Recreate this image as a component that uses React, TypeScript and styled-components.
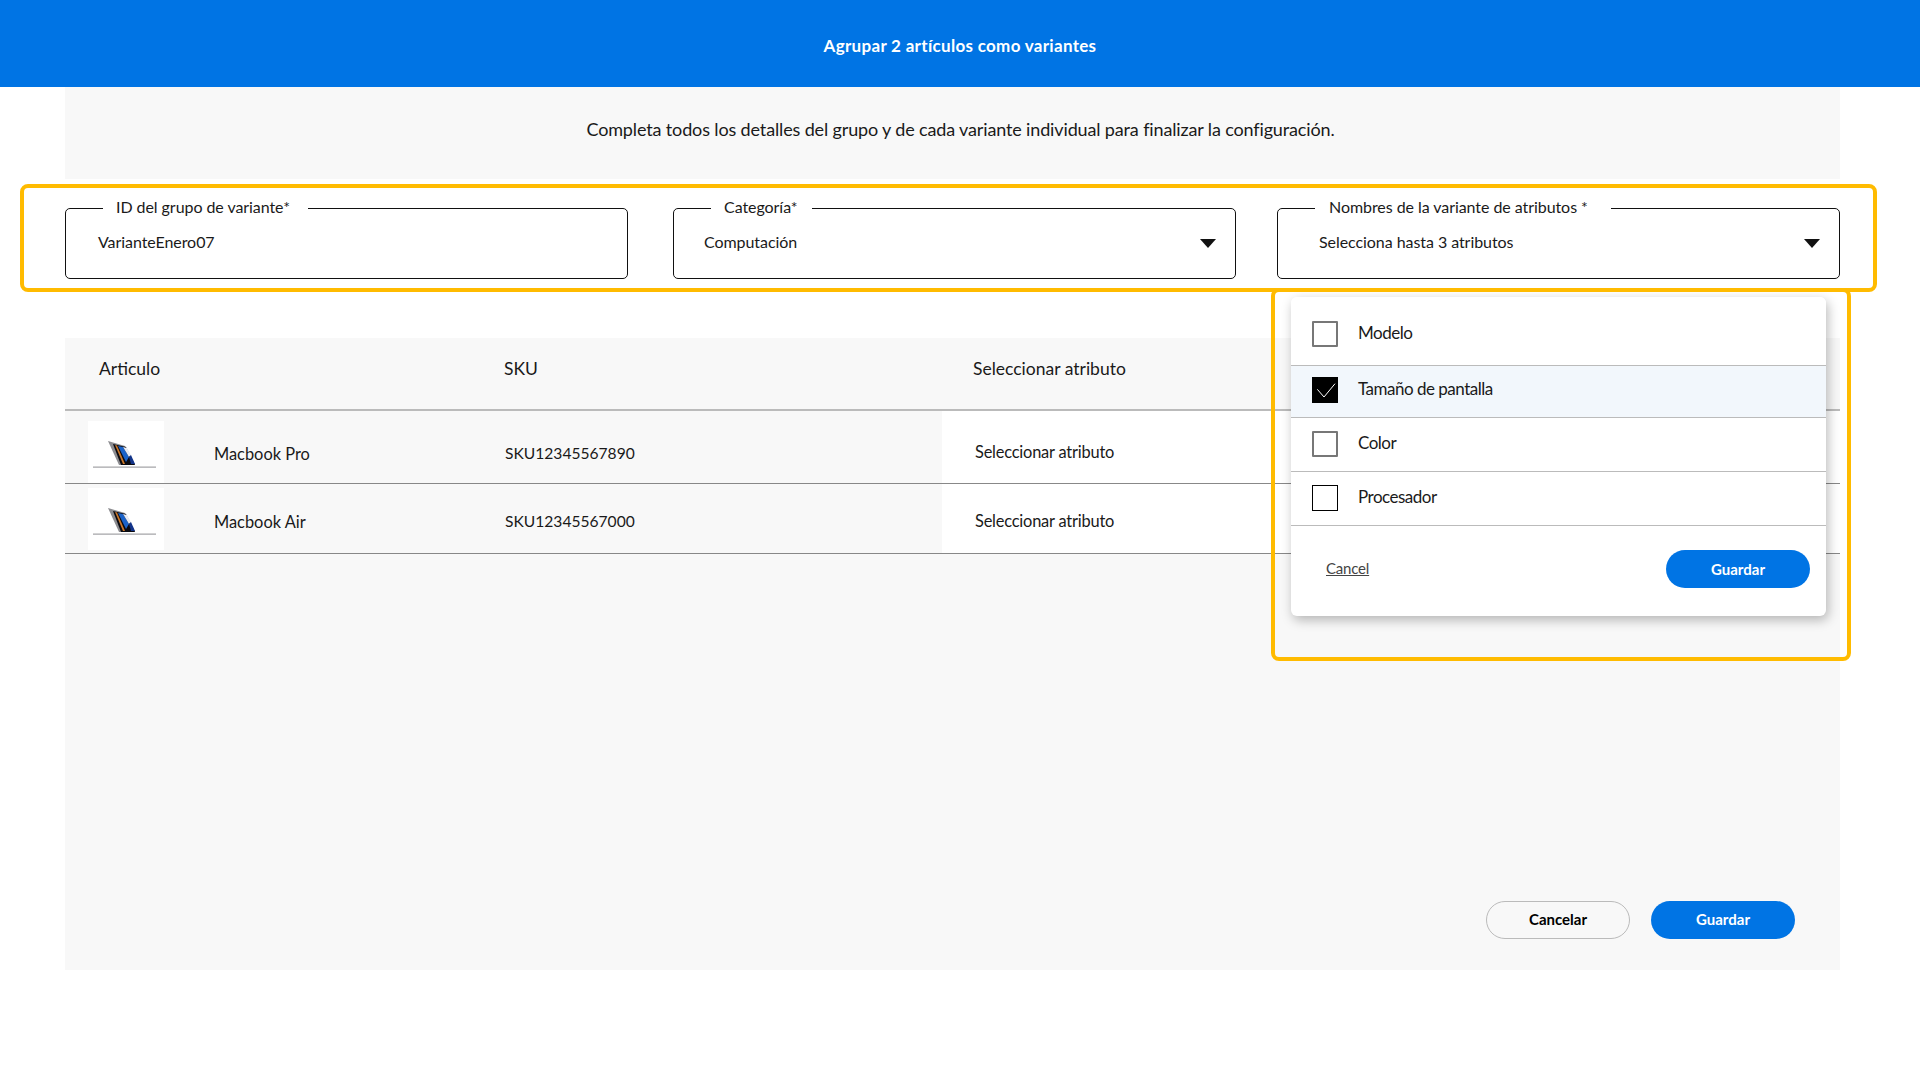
import React from "react"
import styled, { createGlobalStyle } from "styled-components"

const GlobalStyle = createGlobalStyle`
  html, body {
    margin: 0;
    padding: 0;
    background: white;
    color: #1a1a1a;
    font-family: Lato, "Noto Sans", sans-serif;
  }
`

const TopBar = styled.header`
  display: flex;
  align-items: center;
  justify-content: center;
  height: 87px;
  padding-top: 4px;
  box-sizing: border-box;
  background: #0074e4;
  color: white;
  font-size: 17px;
  font-weight: 700;
  letter-spacing: 0.3px;
`

const Panel = styled.main`
  width: 1775px;
  margin-left: 65px;
  background: #f8f8f8;
  padding-bottom: 31px;
`

const Intro = styled.p`
  display: flex;
  justify-content: center;
  height: 92px;
  margin: 0;
  padding: 31px 0 0 16px;
  box-sizing: border-box;
  font-size: 18px;
  line-height: 22px;
  letter-spacing: -0.14px;
`

const FieldsBand = styled.section`
  position: relative;
  display: flex;
  height: 159px;
  padding-top: 19px;
  box-sizing: border-box;
  background: white;
`

const Highlight = styled.div<{ $left: number; $top: number; $w: number; $h: number }>`
  position: absolute;
  z-index: 3;
  left: ${ ({ $left }) => $left }px;
  top: ${ ({ $top }) => $top }px;
  width: ${ ({ $w }) => $w }px;
  height: ${ ({ $h }) => $h }px;
  box-sizing: border-box;
  border: 4px solid #ffbb00;
  border-radius: 8px;
  pointer-events: none;
`

const Field = styled.fieldset<{ $w: number; $gap: number }>`
  width: ${ ({ $w }) => $w }px;
  height: 81px;
  margin: 0 ${ ({ $gap }) => $gap }px 0 0;
  padding: 0;
  box-sizing: border-box;
  border: 1.5px solid #111;
  border-radius: 5px;
  min-width: 0;
`

const FieldLabel = styled.legend<{ $w: number; $pad: number }>`
  width: ${ ({ $w }) => $w }px;
  margin-left: 37px;
  padding: 0 0 2px ${ ({ $pad }) => $pad }px;
  box-sizing: border-box;
  font-size: 16px;
  line-height: 18px;
  letter-spacing: -0.06px;
  white-space: nowrap;
`

const FieldBody = styled.div<{ $inset: number }>`
  display: flex;
  align-items: center;
  justify-content: space-between;
  height: 47px;
  padding: 0 19px 0 ${ ({ $inset }) => $inset }px;
  font-size: 16px;
  letter-spacing: -0.06px;
`

const Caret = styled.svg`
  width: 16px;
  height: 9px;
  margin-top: 4px;
`

const TableRow = styled.div<{ $h: number; $line: string; $lineW: number }>`
  display: grid;
  grid-template-columns: 439px 438px 1fr;
  height: ${ ({ $h }) => $h }px;
  box-sizing: border-box;
  border-bottom: ${ ({ $lineW, $line }) => `${ $lineW }px solid ${ $line }` };
`

const HeadCell = styled.div<{ $inset?: number }>`
  padding: 20px 0 0 ${ ({ $inset }) => $inset ?? 0 }px;
  font-size: 17.5px;
  line-height: 22px;
`

const ItemCell = styled.div<{ $top: number }>`
  display: flex;
  align-items: center;
  align-self: start;
  gap: 50px;
  height: 62px;
  margin-top: ${ ({ $top }) => $top }px;
  padding-left: 23px;
  font-size: 16.4px;
`

const CellText = styled.span<{ $nudge: number }>`
  padding-top: ${ ({ $nudge }) => $nudge }px;
`

const Thumb = styled.svg`
  width: 76px;
  height: 62px;
  background: white;
`

const SkuCell = styled.div<{ $top: number }>`
  display: flex;
  align-items: center;
  align-self: start;
  height: 62px;
  margin-top: ${ ({ $top }) => $top }px;
  padding-left: 1px;
  font-size: 15.6px;
`

const AttrCell = styled.div<{ $pt: number }>`
  display: flex;
  align-items: center;
  padding: ${ ({ $pt }) => $pt }px 0 0 33px;
  background: white;
  font-size: 16.4px;
  letter-spacing: -0.2px;
`

const Popover = styled.div`
  position: absolute;
  z-index: 2;
  left: 1226px;
  top: 118px;
  width: 535px;
  height: 319px;
  border-radius: 6px;
  background: white;
  box-shadow: 2px 4px 12px rgba(0, 0, 0, 0.28);
  overflow: hidden;
`

const Option = styled.div<{ $h: number; $top: number; $selected?: boolean }>`
  display: flex;
  align-items: flex-start;
  gap: 20px;
  height: ${ ({ $h }) => $h }px;
  padding: ${ ({ $top }) => $top }px 0 0 21px;
  box-sizing: border-box;
  border-bottom: 1px solid #bbb;
  background: ${ ({ $selected }) => $selected ? "#f2f7fc" : "white" };
  font-size: 17px;
  line-height: 24px;
  letter-spacing: -0.5px;
`

const Box = styled.span<{ $checked?: boolean; $thin?: boolean }>`
  display: flex;
  flex: none;
  align-items: center;
  justify-content: center;
  width: 26px;
  height: 26px;
  box-sizing: border-box;
  border: ${ ({ $thin, $checked }) => $thin || $checked ? "1.5px solid black" : "2px solid #777" };
  border-radius: ${ ({ $thin, $checked }) => $thin || $checked ? 0 : 1 }px;
  background: ${ ({ $checked }) => $checked ? "black" : "white" };
`

const CheckMark = styled.svg`
  flex: none;
  width: 26px;
  height: 26px;
`

const PopoverFooter = styled.div`
  display: flex;
  align-items: flex-start;
  justify-content: space-between;
  padding: 24px 16px 0 35px;
`

const CancelLink = styled.a`
  color: #444;
  font-size: 15px;
  line-height: 36px;
  letter-spacing: -0.2px;
  text-decoration: underline;
`

const PillButton = styled.button<{ $outline?: boolean }>`
  width: 144px;
  height: 38px;
  border-radius: 19px;
  border: ${ ({ $outline }) => $outline ? "1px solid #bbb" : "none" };
  background: ${ ({ $outline }) => $outline ? "transparent" : "#0074e4" };
  color: ${ ({ $outline }) => $outline ? "black" : "white" };
  font-family: inherit;
  font-size: 15px;
  font-weight: 700;
`

const Actions = styled.div`
  display: flex;
  justify-content: flex-end;
  gap: 21px;
  margin-top: 347px;
  padding-right: 45px;

  ${ PillButton } {
    padding: 0 1px 3px 1px;
  }
`

const CaretIcon = () => (
  <Caret viewBox="0 0 16 9">
    <path d="M0 0h16L8 9z" fill="#111" />
  </Caret>
)

const CheckIcon = () => (
  <CheckMark viewBox="0 0 26 26">
    <path d="M5.3 12.3 12 20 23 6.7" fill="none" stroke="white" strokeWidth="1" />
  </CheckMark>
)

const LaptopThumb = () => (
  <Thumb viewBox="0 0 76 62">
    <path d="M5 45.4h63v1.300H5z" fill="#a5a5a8" />
    <path d="M20 20l17 5 10 19H31z" fill="#8c8c90" />
    <path d="M25 23l13 3 9 18H33z" fill="#0a0a10" />
    <path d="M27 24l2 .5 8 18.500h-2z" fill="#c9772a" />
    <path d="M30 25l5 1 6 10-3 5z" fill="#1a62c8" />
    <path d="M35 26l4 1 4 7-2 2z" fill="#e8ebf4" />
    <path d="M41 36l2-2 4 9h-4z" fill="#12348a" />
  </Thumb>
)

const ITEMS = [
  { name: "Macbook Pro", sku: "SKU12345567890", h: 73, top: 10, attrTop: 8, nudge: 2 },
  { name: "Macbook Air", sku: "SKU12345567000", h: 70, top: 4, attrTop: 3, nudge: 4 },
]

export default function App() {
  return (
    <>
      <GlobalStyle />
      <TopBar>Agrupar 2 artículos como variantes</TopBar>
      <Panel>
        <Intro>Completa todos los detalles del grupo y de cada variante individual para finalizar la configuración.</Intro>

        <FieldsBand>
          <Highlight $left={ -45 } $top={ 5 } $w={ 1857 } $h={ 108 } />
          <Field $w={ 563 } $gap={ 45 }>
            <FieldLabel $w={ 205 } $pad={ 13 }>ID del grupo de variante*</FieldLabel>
            <FieldBody $inset={ 32 }>VarianteEnero07</FieldBody>
          </Field>
          <Field $w={ 563 } $gap={ 41 }>
            <FieldLabel $w={ 101 } $pad={ 13 }>Categoría*</FieldLabel>
            <FieldBody $inset={ 30 }>Computación<CaretIcon /></FieldBody>
          </Field>
          <Field $w={ 563 } $gap={ 0 }>
            <FieldLabel $w={ 296 } $pad={ 14 }>Nombres de la variante de atributos *</FieldLabel>
            <FieldBody $inset={ 41 }>Selecciona hasta 3 atributos<CaretIcon /></FieldBody>
          </Field>

          <Highlight $left={ 1206 } $top={ 109 } $w={ 580 } $h={ 373 } />
          <Popover>
            <Option $h={ 69 } $top={ 24 }><Box />Modelo</Option>
            <Option $h={ 52 } $top={ 11 } $selected><Box $checked><CheckIcon /></Box>Tamaño de pantalla</Option>
            <Option $h={ 54 } $top={ 13 }><Box />Color</Option>
            <Option $h={ 54 } $top={ 13 }><Box $thin />Procesador</Option>
            <PopoverFooter>
              <CancelLink>Cancel</CancelLink>
              <PillButton>Guardar</PillButton>
            </PopoverFooter>
          </Popover>
        </FieldsBand>

        <TableRow $h={ 73 } $line="#bbb" $lineW={ 2 }>
          <HeadCell $inset={ 34 }>Articulo</HeadCell>
          <HeadCell>SKU</HeadCell>
          <HeadCell $inset={ 31 }>Seleccionar atributo</HeadCell>
        </TableRow>
        { ITEMS.map( item => (
          <TableRow key={ item.sku } $h={ item.h } $line="#888" $lineW={ 1 }>
            <ItemCell $top={ item.top }>
              <LaptopThumb />
              <CellText $nudge={ item.nudge }>{ item.name }</CellText>
            </ItemCell>
            <SkuCell $top={ item.top }><CellText $nudge={ item.nudge }>{ item.sku }</CellText></SkuCell>
            <AttrCell $pt={ item.attrTop }>Seleccionar atributo</AttrCell>
          </TableRow>
        ) ) }

        <Actions>
          <PillButton $outline>Cancelar</PillButton>
          <PillButton>Guardar</PillButton>
        </Actions>
      </Panel>
    </>
  )
}
